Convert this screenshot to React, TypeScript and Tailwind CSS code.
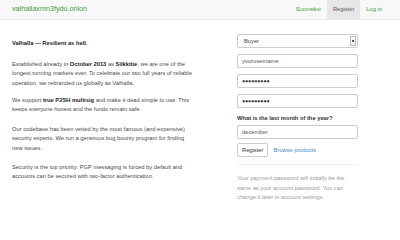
export default function App() {
  return (
    <div className="w-[400px] h-[240px] bg-white overflow-hidden font-['Liberation_Sans',Arial,sans-serif] text-[#555]">
      <nav className="h-[20px] bg-[#f8f8f8] border-b border-[#e7e7e7] flex items-stretch justify-between pl-[12px] pr-[12px]">
        <div className="flex items-center text-[7.2px] text-[#3f9a3f]">valhallaxmn3fydu.onion</div>
        <div className="flex items-stretch text-[5.75px]">
          <span className="flex items-center px-[6px] text-[#3f9a3f]">Suomeksi</span>
          <span className="flex items-center px-[6px] bg-[#e7e7e7] text-[#555]">Register</span>
          <span className="flex items-center px-[6px] text-[#3f9a3f]">Log in</span>
        </div>
      </nav>

      <div className="flex pl-[12px] pt-[14px]">
        <div className="w-[184px] text-[5.75px] leading-[9.6px] text-[#4a4a4a]">
          <p className="mt-[5px] mb-[11px] font-bold text-[#222]">Valhalla — Resilient as hell.</p>
          <p className="mb-[7.5px]">
            Established already in <b className="text-[#222]">October 2013</b> as <b className="text-[#222]">Silkkitie</b>, we are one of the
            longest running markets ever. To celebrate our two full years of reliable operation, we rebranded us globally as Valhalla.
          </p>
          <p className="mb-[9.5px]">
            We support <b className="text-[#222]">true P2SH multisig</b> and make it dead simple to use. This keeps everyone honest and the funds remain safe.
          </p>
          <p className="mb-[9.5px]">
            Our codebase has been vetted by the most famous (and expensive) security experts. We run a generous bug bounty program for finding new issues.
          </p>
          <p>
            Security is the top priority: PGP messaging is forced by default and accounts can be secured with two-factor authentication.
          </p>
        </div>

        <div className="ml-[41px] w-[121px] text-[5.75px]">
          <div className="h-[14px] border border-[#ccc] rounded-[2px] flex items-center justify-between pl-[6px] pr-[1px] text-[#444]">
            <span>Buyer</span>
            <span className="w-[6px] h-[10px] border border-[#bbb] bg-[#f7f7f7] flex items-center justify-center">
              <span className="w-[2px] h-[1.5px] bg-[#555]" />
            </span>
          </div>
          <div className="mt-[6px] h-[14px] border border-[#ccc] rounded-[2px] flex items-center px-[4px] text-[#555]">yourusername</div>
          <div className="mt-[6px] h-[14px] border border-[#ccc] rounded-[2px] flex items-center px-[4px] text-[#333] text-[5.4px] tracking-[-0.2px]">●●●●●●●●●</div>
          <div className="mt-[6px] h-[14px] border border-[#ccc] rounded-[2px] flex items-center px-[4px] text-[#333] text-[5.4px] tracking-[-0.2px]">●●●●●●●●●</div>
          <div className="mt-[6px] font-bold text-[#333] leading-[8px]">What is the last month of the year?</div>
          <div className="mt-[3px] h-[14px] border border-[#ccc] rounded-[2px] flex items-center px-[4px] text-[#555]">december</div>
          <div className="mt-[4px] flex items-center">
            <span className="h-[14px] border border-[#ccc] rounded-[2px] flex items-center px-[4px] text-[#333]">Register</span>
            <span className="ml-[5px] text-[#428bca]">Browse products</span>
          </div>
          <div className="mt-[7px] border-t border-[#eee]" />
          <p className="mt-[9px] leading-[9.6px] text-[#999]">
            Your payment password will initially be the same as your account password. You can change it later in account settings.
          </p>
        </div>
      </div>
    </div>
  );
}
